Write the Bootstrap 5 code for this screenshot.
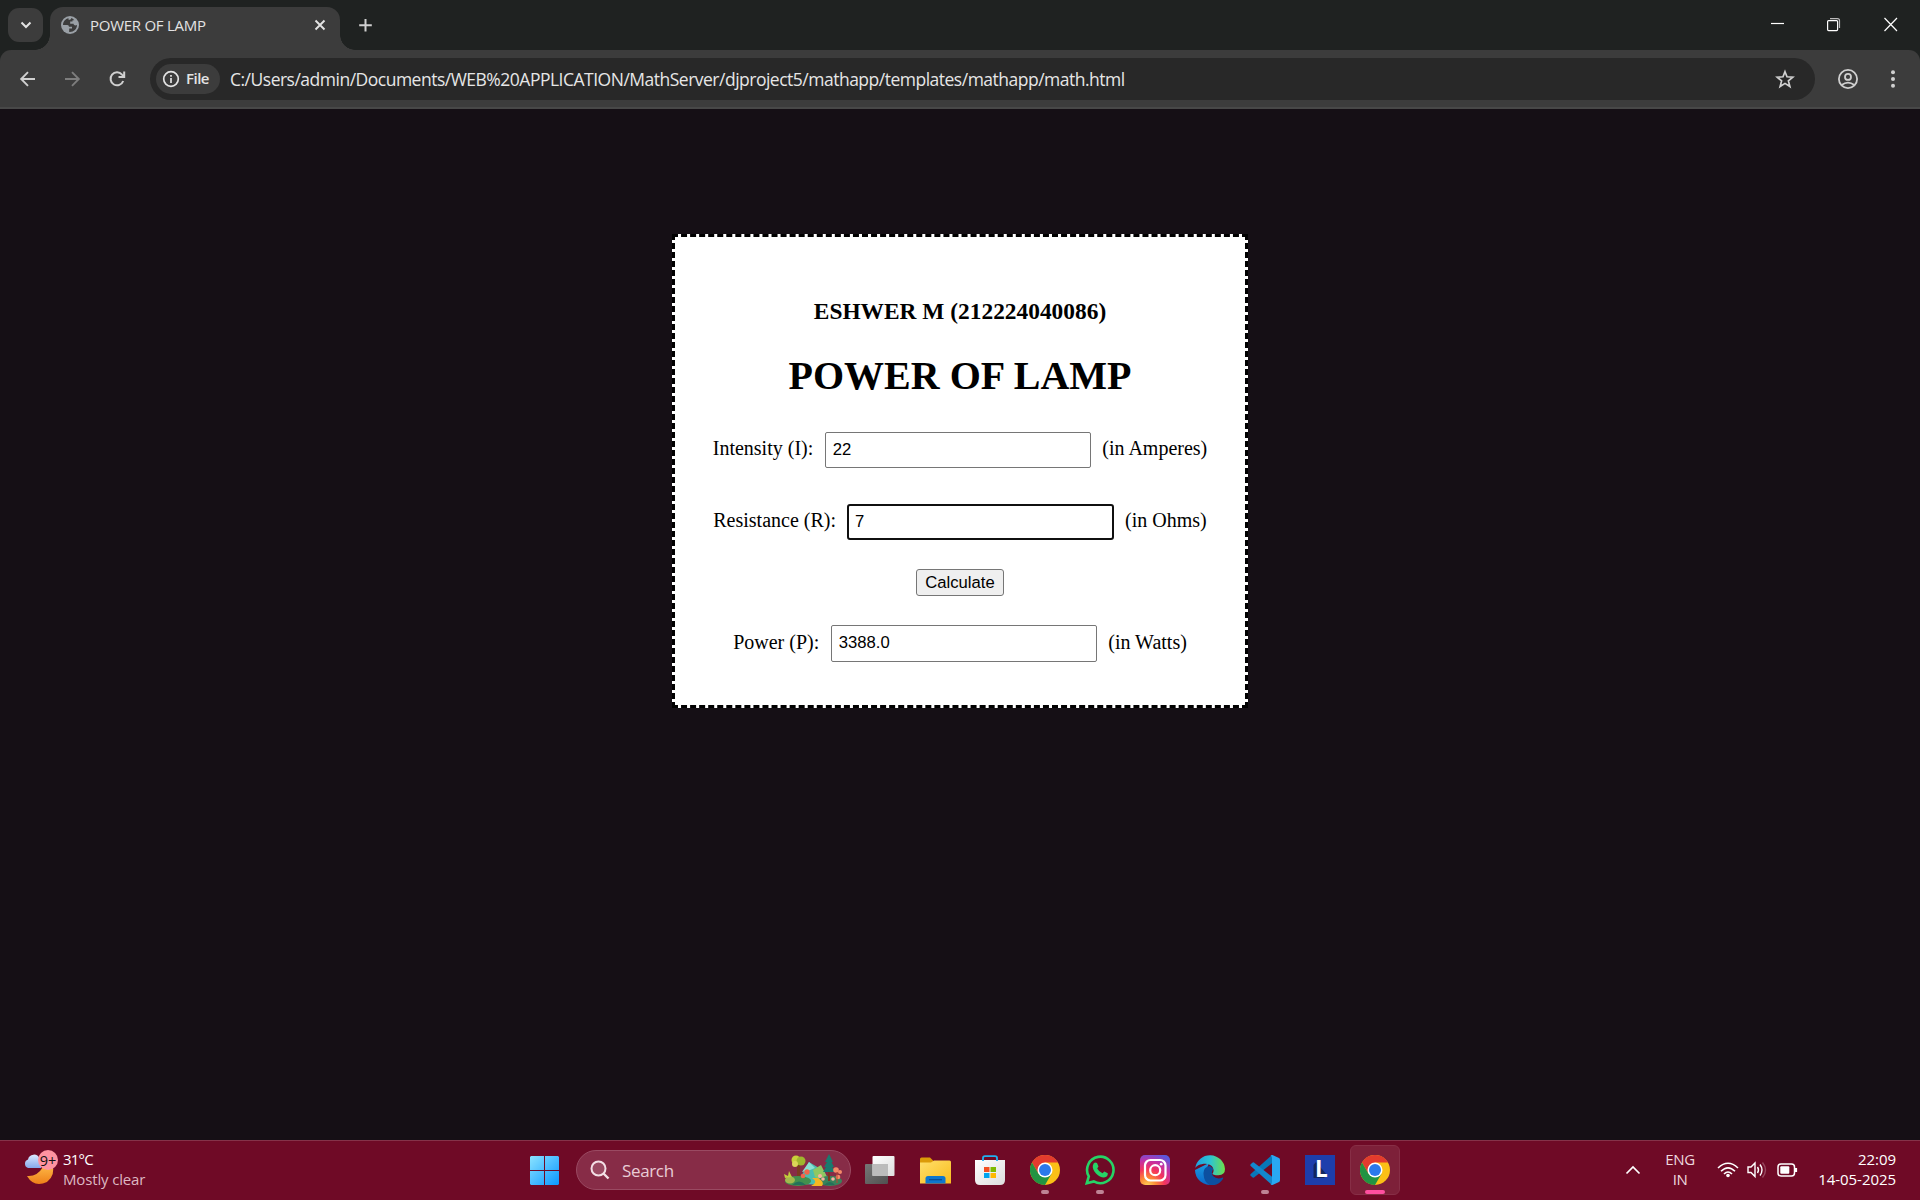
<!DOCTYPE html>
<html lang="en">
<head>
<meta charset="utf-8">
<title>POWER OF LAMP</title>
<link href="https://cdn.jsdelivr.net/npm/bootstrap@5.3.0/dist/css/bootstrap.min.css" rel="stylesheet">
<style>
body{width:1920px;height:1200px;overflow:hidden;background:#150f15;font-family:"Open Sans","Noto Sans",sans-serif;line-height:1;color:#e3e3e3}
svg{display:block;flex:none}
.tabstrip{height:50px;background:#1f2221;padding:7px 0 0 8px}
.tab-search{width:35px;height:34px;margin-top:1px;border-radius:11px;background:#3c3c3c}
.tab-active{width:290px;height:43px;margin-left:7px;padding:0 13px 7px 11px;background:#3c3c3c;border-radius:13px 13px 0 0;position:relative}
.tab-active::before,.tab-active::after{content:"";position:absolute;bottom:0;width:15px;height:15px}
.tab-active::before{left:-15px;background:radial-gradient(circle at 0 0,transparent 14.5px,#3c3c3c 15px)}
.tab-active::after{right:-15px;background:radial-gradient(circle at 100% 0,transparent 14.5px,#3c3c3c 15px)}
.tab-title{font-size:15px;letter-spacing:-.27px;margin-left:11px;line-height:20px}
.new-tab{margin-left:17px}
.win-controls{padding-right:21px}
.toolbar-wrap{background:#1f2221}
.toolbar{height:59px;background:#3c3c3c;border-radius:11px 11px 0 0;border-bottom:2px solid #484848;padding:0 0 0 17px}
.nav-ico{width:45px}
.omnibox{width:1665px;height:42px;border-radius:21px;background:#282828;padding:0 20px 0 6px}
.chip{width:64px;height:30px;border-radius:15px;background:#3c3c3c;padding-left:6px}
.chip-text{font-size:15px;font-weight:600;letter-spacing:-.5px;margin-left:6px}
.url{font-size:17.5px;letter-spacing:-.5px;margin-left:10px;line-height:24px;color:#e6e6e6}
.page{height:1031px;padding-top:125px}
.lamp{width:576px;height:474px;background:#fff;border:3px dashed #000;color:#000;font-family:"Liberation Serif",serif;font-size:20px}
.lamp h3{font-size:23.4px;line-height:28px;font-weight:700;margin:60px 0 28px}
.lamp h1{font-size:40px;line-height:46px;font-weight:700;margin:0 0 33px}
.field{height:36px}
.field label,.field span{line-height:32px;height:36px}
.field input{width:266px;height:36px;border:1px solid #767676;border-radius:2px;padding:0 7px;margin:0 11.5px;font:16.67px "Liberation Sans",sans-serif;color:#000;outline:0;background:#fff}
.field input.active-in{width:267px;border:2px solid #101010;border-radius:3px;padding:0 6px;margin:0 11px}
.field.result label,.field.result span{line-height:34px}
.field.result input{height:37px;padding-bottom:2px}
.calc{width:88px;height:27px;margin:29px 0;border:1px solid #767676;border-radius:3px;background:#efefef;color:#000;font:16.67px "Liberation Sans",sans-serif;padding:0}
.taskbar{height:60px;background:#6f0a26;box-shadow:inset 0 1px #853249}
.weather{width:517px;padding-left:23px}
.two-line{font-size:15px;line-height:20px;margin-top:-3px}
.start{width:55px}
.search-pill{width:275px;height:40px;margin:0 1.5px 0 4px;border-radius:20px;background:#872c47;border:1px solid #9a4a62;padding:0 8px 0 13px;color:#e9cdd6}
.app{width:55px;height:60px;position:relative}
.app.tile::before{content:"";position:absolute;left:2.500px;top:5px;width:50px;height:50px;border-radius:6px;background:#7d2039;border:1px solid #872e46}
.app svg{position:relative}
.dot::after,.tile::after{content:"";position:absolute;bottom:6px;left:23.5px;width:8px;height:4px;border-radius:2px;background:#be8495}
.tile::after{left:17.5px;width:20px;background:#ff4fa0}
.tray{padding-right:24px;color:#fff}
</style>
</head>
<body>
<svg width="0" height="0" class="position-absolute"><defs>
<linearGradient id="win" x2="1" y2="1"><stop stop-color="#8be3ff"/><stop offset="1" stop-color="#0a97ff"/></linearGradient>
<linearGradient id="fold" x2="1" y2="1"><stop stop-color="#ffdf6b"/><stop offset="1" stop-color="#f9bd1d"/></linearGradient>
<linearGradient id="moon" y2="1" x2="0"><stop stop-color="#ffc04d"/><stop offset="1" stop-color="#ef8019"/></linearGradient>
<linearGradient id="cloud" y2="1" x2="0"><stop stop-color="#dbe8ff"/><stop offset="1" stop-color="#86a9ea"/></linearGradient>
<radialGradient id="insta" cx=".25" cy="1.05" r="1.15"><stop stop-color="#ffd95c"/><stop offset=".25" stop-color="#fd8a35"/><stop offset=".5" stop-color="#f4355c"/><stop offset=".75" stop-color="#c431a5"/><stop offset="1" stop-color="#5b57dc"/></radialGradient>
<linearGradient id="edgeA" x2="1"><stop stop-color="#1f9fe0"/><stop offset=".5" stop-color="#2cc3d5"/><stop offset="1" stop-color="#6ee04a"/></linearGradient>
<linearGradient id="edgeB" y2="1" x2="0"><stop stop-color="#1b9de2"/><stop offset="1" stop-color="#0a66c8"/></linearGradient>
<linearGradient id="gray" x2="1" y2="1"><stop stop-color="#777"/><stop offset="1" stop-color="#505050"/></linearGradient>
<linearGradient id="light" x2="1" y2="1"><stop stop-color="#fff"/><stop offset="1" stop-color="#ddd"/></linearGradient>
<symbol id="chrome" viewBox="0 0 30 30">
<circle cx="15" cy="15" r="15" fill="#fbc016"/>
<path d="M2 7.5A15 15 0 0 1 28 7.5H15L8.5 18.75Z" fill="#e33b2e"/>
<path d="M2 7.5A15 15 0 0 0 15 30L21.5 18.75 15 15 8.5 18.75Z" fill="#229342"/>
<circle cx="15" cy="15" r="7.5" fill="#fff"/><circle cx="15" cy="15" r="6" fill="#2a79ec"/>
</symbol>
</defs></svg>

<header>
<div class="tabstrip d-flex">
  <div class="tab-search d-flex align-items-center justify-content-center"><svg width="12" height="8" fill="none" stroke="#e3e3e3" stroke-width="2"><path d="M1.5 1.5 6 6 10.500 1.5"/></svg></div>
  <div class="tab-active d-flex align-items-center">
    <svg width="18" height="18" viewBox="0 0 18 18"><circle cx="9" cy="9" r="9" fill="#9aa0a6"/><path d="M7.500 2.200C4.500 2.800 2 5.500 2 9h4.200c1.300 0 1.700.8 1.700 1.700H11V12.500H8.200v3.400c4.300.3 7.800-2.500 7.800-6.900-1.500.9-3.300.4-3.500-1.200H9.200V5.600h2.300V4.200h1.800A7 7 0 0 0 10.200 2.100C10.200 3.600 9 4 7.700 4Z" fill="#3c3c3c"/></svg>
    <span class="tab-title">POWER OF LAMP</span>
    <svg class="ms-auto" width="14" height="14" fill="none" stroke="#e3e3e3" stroke-width="1.900"><path d="M2.500 2.500 11.500 11.500M11.500 2.500 2.500 11.500"/></svg>
  </div>
  <svg class="new-tab" width="18" height="36" fill="none" stroke="#d0d0d0" stroke-width="2"><path d="M8.500 12V24.500M2.200 18.200H14.800"/></svg>
  <div class="win-controls ms-auto d-flex">
    <svg width="130" height="34" fill="none" stroke="#fff" stroke-width="1.200"><path d="M2 16.500H15"/><rect x="58.600" y="13.600" width="10" height="10" rx="1"/><path d="M61 11.600H68.500Q70.500 11.600 70.500 13.600V21" stroke="#bbb"/><path d="M115.500 11 128 24M128 11 115.500 24"/></svg>
  </div>
</div>
<div class="toolbar-wrap">
<div class="toolbar d-flex align-items-center">
  <svg class="nav-ico" height="20" fill="none" stroke="#d0d0d0" stroke-width="1.900"><path d="M18 10H4.500M11 3.200 4.200 10 11 16.800"/></svg>
  <svg class="nav-ico" height="20" fill="none" stroke="#7d7d7d" stroke-width="1.900"><path d="M3 10H16.500M10 3.200 16.800 10 10 16.800"/></svg>
  <svg style="width:43px" height="20" fill="none" stroke="#d0d0d0" stroke-width="2"><path d="M16.200 12A6.500 6.500 0 1 1 15 5.600L17 7.600M17.200 2.500V8H11.500"/></svg>
  <div class="omnibox d-flex align-items-center">
    <div class="chip d-flex align-items-center"><svg width="18" height="18" fill="none" stroke="#e3e3e3" stroke-width="1.700"><circle cx="9" cy="9" r="7.300"/><path d="M9 8V13M9 5V6.700"/></svg><span class="chip-text">File</span></div>
    <span class="url">C:/Users/admin/Documents/WEB%20APPLICATION/MathServer/djproject5/mathapp/templates/mathapp/math.html</span>
    <svg class="ms-auto" width="20" height="20" fill="none" stroke="#d0d0d0" stroke-width="1.700"><path d="M10 2.700 12 7.800 17.800 8.200 13.400 11.900 14.900 17.500 10 14.400 5.100 17.500 6.600 11.900 2.200 8.200 8 7.800Z"/></svg>
  </div>
  <svg style="margin-left:22.500px" width="20" height="20" fill="none" stroke="#d0d0d0" stroke-width="1.800"><circle cx="10" cy="10" r="9.100"/><circle cx="10" cy="7.900" r="3"/><path d="M3.700 16Q10 11.200 16.300 16"/></svg>
  <svg style="margin-left:32px" width="6" height="20" fill="#d0d0d0"><circle cx="3" cy="3.200" r="2"/><circle cx="3" cy="10" r="2"/><circle cx="3" cy="16.800" r="2"/></svg>
</div>
</div>
</header>

<main class="page">
  <form class="lamp mx-auto d-flex flex-column align-items-center">
    <h3>ESHWER M (212224040086)</h3>
    <h1>POWER OF LAMP</h1>
    <div class="field d-flex"><label>Intensity (I):</label><input type="text" value="22"><span>(in Amperes)</span></div>
    <div class="field d-flex" style="margin-top:36px"><label>Resistance (R):</label><input class="active-in" type="text" value="7"><span>(in Ohms)</span></div>
    <button class="calc" type="button">Calculate</button>
    <div class="field result d-flex"><label>Power (P):</label><input type="text" value="3388.0"><span>(in Watts)</span></div>
  </form>
</main>

<footer class="taskbar d-flex align-items-center">
  <div class="weather d-flex align-items-center">
    <svg width="40" height="44" viewBox="0 0 40 44"><path d="M4 28Q14 29 20 19L29 15Q33 27 24 34 11 40 4 28Z" fill="url(#moon)"/><path d="M5 20a4.500 4.500 0 0 1 0-8.500 6 6 0 0 1 11.500-1Q19 15 18 20Z" fill="url(#cloud)"/><circle cx="25" cy="12" r="10" fill="#ff93a0"/><text x="25" y="17.500" text-anchor="middle" font-size="14.500" fill="#111">9+</text></svg>
    <div class="two-line"><div style="color:#fff;letter-spacing:-.8px">31°C</div><div style="color:#ddb8c2;letter-spacing:-.15px">Mostly clear</div></div>
  </div>
  <div class="start d-flex justify-content-center"><svg width="29" height="29" fill="url(#win)"><path d="M1 0H14V14H0V1ZM15 0H28L29 1V14H15ZM0 15H14V29H1L0 28ZM15 15H29V28L28 29H15Z"/></svg></div>
  <div class="search-pill d-flex align-items-center">
    <svg width="20" height="20" fill="none" stroke="#f3dfe5" stroke-width="2"><circle cx="8.500" cy="8.500" r="7" fill="#9a4a62"/><path d="M13.500 13.500 18.500 18.500" stroke-width="2.400"/></svg>
    <span style="font-size:17px;letter-spacing:-.35px;margin-left:12px">Search</span>
    <svg class="ms-auto" width="58" height="32" viewBox="0 0 58 32">
      <path d="M13 30 25 8 40 17 47 31Z" fill="#4bbdb0"/><path d="M18 18 25 8 31 14 26 16Z" fill="#8be0d2"/><path d="M29 16 37 11 45 27 31 23Z" fill="#8fc862"/>
      <path d="M13 9H16V25H13Z" fill="#7b3a21"/><circle cx="12" cy="6" r="4.500" fill="#c9cf3a"/><circle cx="17" cy="7" r="4.500" fill="#9fb52e"/><circle cx="11" cy="10" r="3" fill="#dbd657"/>
      <ellipse cx="14" cy="27" rx="13" ry="5" fill="#43904e"/><ellipse cx="6" cy="26" rx="5" ry="3.500" fill="#a5b84e"/><path d="M1 24 0 20 4 22 5 17 8 23Z" fill="#c1ce3b"/>
      <ellipse cx="46" cy="27" rx="12" ry="5" fill="#39825a"/><path d="M27 32Q35 28 28 24L34 24Q41 28 38 32Z" fill="#f6b622"/>
      <path d="M44 15H46V27H44Z" fill="#7b3a21"/><path d="M45 0 49 8 47.500 8 50 13 48 13 51 18H39L42 13 40 13 43 8 41 8Z" fill="#197a6e"/>
      <g fill="#f2664a"><circle cx="23" cy="18" r="2.700"/><circle cx="19" cy="22" r="2.300"/></g><g fill="#f58a68"><circle cx="52" cy="16" r="2.800"/><circle cx="56" cy="18" r="2"/><circle cx="54" cy="23" r="2.300"/></g><g fill="#f8b3a0"><circle cx="36" cy="22" r="2"/><circle cx="39" cy="25" r="1.800"/><circle cx="49" cy="25" r="1.800"/></g><path d="M53 18V29" stroke="#b74830"/>
      <path d="M8 31Q15 24 22 31ZM40 31Q46 25 51 31Z" fill="#24715a"/>
    </svg>
  </div>
  <div class="app d-flex align-items-center justify-content-center"><svg width="30" height="28"><rect y="8" width="23" height="20" rx="1" fill="url(#gray)"/><rect x="7.500" width="22" height="20" rx="1" fill="url(#light)"/><path d="M7.500 8H23V20H7.500Z" fill="#bcbcbc"/></svg></div>
  <div class="app d-flex align-items-center justify-content-center"><svg width="31" height="27"><path d="M0 2Q0 .5 1.500.5H10L14 4.500V9H0Z" fill="#dc9b08"/><path d="M0 5.500H11L14 3.500H29.500Q31 3.500 31 5V26.500H0Z" fill="url(#fold)"/><path d="M5.500 26.500V21.500Q5.500 19 8 19H23Q25.500 19 25.500 21.500V26.500Z" fill="#0e77cd"/><path d="M9 22.700H22" stroke="#084b94" stroke-width="1.200"/></svg></div>
  <div class="app d-flex align-items-center justify-content-center"><svg width="30" height="30"><path d="M0 5H30V25Q30 30 25 30H5Q0 30 0 25Z" fill="url(#light)"/><path d="M8 6V3Q8 1.200 10 1.200H20Q22 1.200 22 3V6" fill="none" stroke="#20b1f2" stroke-width="1.800"/><path d="M9 12H14.500V17H9Z" fill="#f25022"/><path d="M15.500 12H21V17H15.500Z" fill="#7fba00"/><path d="M9 18H14.500V23H9Z" fill="#00a4ef"/><path d="M15.500 18H21V23H15.500Z" fill="#ffb900"/></svg></div>
  <div class="app dot d-flex align-items-center justify-content-center"><svg width="30" height="30"><use href="#chrome"/></svg></div>
  <div class="app dot d-flex align-items-center justify-content-center"><svg width="30" height="30"><path d="M1.800 28.200 3.800 21.400A13.200 13.200 0 1 1 8.800 26.400Z" fill="none" stroke="#26d366" stroke-width="2.600"/><path d="M10 7.500 12 8 13.500 11.500 12.200 13.500Q14 17 17.500 18.200L19.300 16.500 22.800 18.200Q23 22 19 22.400 15 22.500 11 18.500 7.300 14.500 7.800 10.800 8.300 8 10 7.500Z" fill="#26d366"/></svg></div>
  <div class="app d-flex align-items-center justify-content-center"><svg width="30" height="30"><rect width="30" height="30" rx="5" fill="url(#insta)"/><g fill="none" stroke="#fff" stroke-width="2.200"><rect x="5" y="5" width="20.500" height="20.500" rx="5.500"/><circle cx="15.200" cy="15.200" r="5"/></g><circle cx="21.200" cy="9.200" r="1.400" fill="#fff"/></svg></div>
  <div class="app d-flex align-items-center justify-content-center"><svg width="30" height="30"><path d="M0 15A15 15 0 0 0 18 29.700L27.500 24Q23 26 18 22L11 16 14 8Z" fill="url(#edgeB)"/><path d="M8.500 19Q8 12 15 11L18.500 14Q15.500 17 18 21 22 25 27.800 22.500 28.500 22.600 28 23.700 23 31.500 14.500 30 9 27 8.500 19Z" fill="#0c50a0"/><path d="M.2 13A15 15 0 0 1 30 14Q30 20 23.500 20.300 17.500 20.200 17.500 18.500C20 16 18.500 9 10.500 8.800 5 8.800 1.500 11 .2 13Z" fill="url(#edgeA)"/></svg></div>
  <div class="app dot d-flex align-items-center justify-content-center"><svg width="30" height="30"><path d="M22 0 23 7.500 4 22.500Q3 23 2 22L.5 20.500Q0 19.800.7 19Z" fill="#0877b9"/><path d="M22 30 23 22.500 4 7.500Q3 7 2 8L.5 9.500Q0 10.200.7 11Z" fill="#1287cd"/><path d="M20.500 29.600Q22 29 22 27V3Q22 1 20.500.4L22.500 0 29 3Q30 3.500 30 5V25Q30 26.500 29 27L22.500 30Z" fill="#29a8f2"/></svg></div>
  <div class="app d-flex align-items-center justify-content-center"><svg width="30" height="30" overflow="visible"><rect width="30" height="30" fill="#1d3eac"/><path d="M11 7 8.500 10V23H19L22 20Z" fill="#12265f"/><text x="10" y="22" font-size="22.500" font-weight="700" font-family="Open Sans" fill="#fff">L</text></svg></div>
  <div class="app tile d-flex align-items-center justify-content-center"><svg width="30" height="30"><use href="#chrome"/></svg></div>
  <div class="tray ms-auto d-flex align-items-center">
    <svg width="16" height="10" fill="none" stroke="#fff" stroke-width="1.700"><path d="M1.500 8.500 8 2 14.500 8.500"/></svg>
    <div class="two-line text-center" style="width:30px;margin-left:24px;color:#eed8df;letter-spacing:-.4px">ENG<br>IN</div>
    <svg style="margin-left:22px" width="22" height="16" fill="none" stroke="#fff" stroke-width="1.600"><path d="M1 6Q11-3.500 21 6M4 9.300Q11 2.300 18 9.300M7 12Q11 8 15 12"/><circle cx="11" cy="13.500" r="1.800" fill="#fff" stroke="none"/></svg>
    <svg style="margin-left:8px" width="21" height="18" fill="none" stroke="#fff" stroke-width="1.400"><path d="M1 6H4L8 2V15.500L4 11.500H1Z"/><path d="M10.500 6Q12.500 9 10.500 12M13 3.500Q17 9 13 14.500"/><path d="M15.500 1.500Q21.500 9 15.500 16.500" stroke="#96485e"/></svg>
    <svg style="margin-left:9px" width="21" height="16" fill="none" stroke="#fff" stroke-width="1.500"><rect x="1" y="2" width="16.500" height="12" rx="3"/><rect x="3.300" y="4.300" width="9" height="7.500" rx="1" fill="#fff" stroke="none"/><path d="M19 6V10" stroke-width="2.200"/></svg>
    <div class="two-line text-end" style="width:98px;letter-spacing:-.05px">22:09<br>14-05-2025</div>
  </div>
</footer>
<script src="https://cdn.jsdelivr.net/npm/bootstrap@5.3.0/dist/js/bootstrap.bundle.min.js"></script>
</body>
</html>
